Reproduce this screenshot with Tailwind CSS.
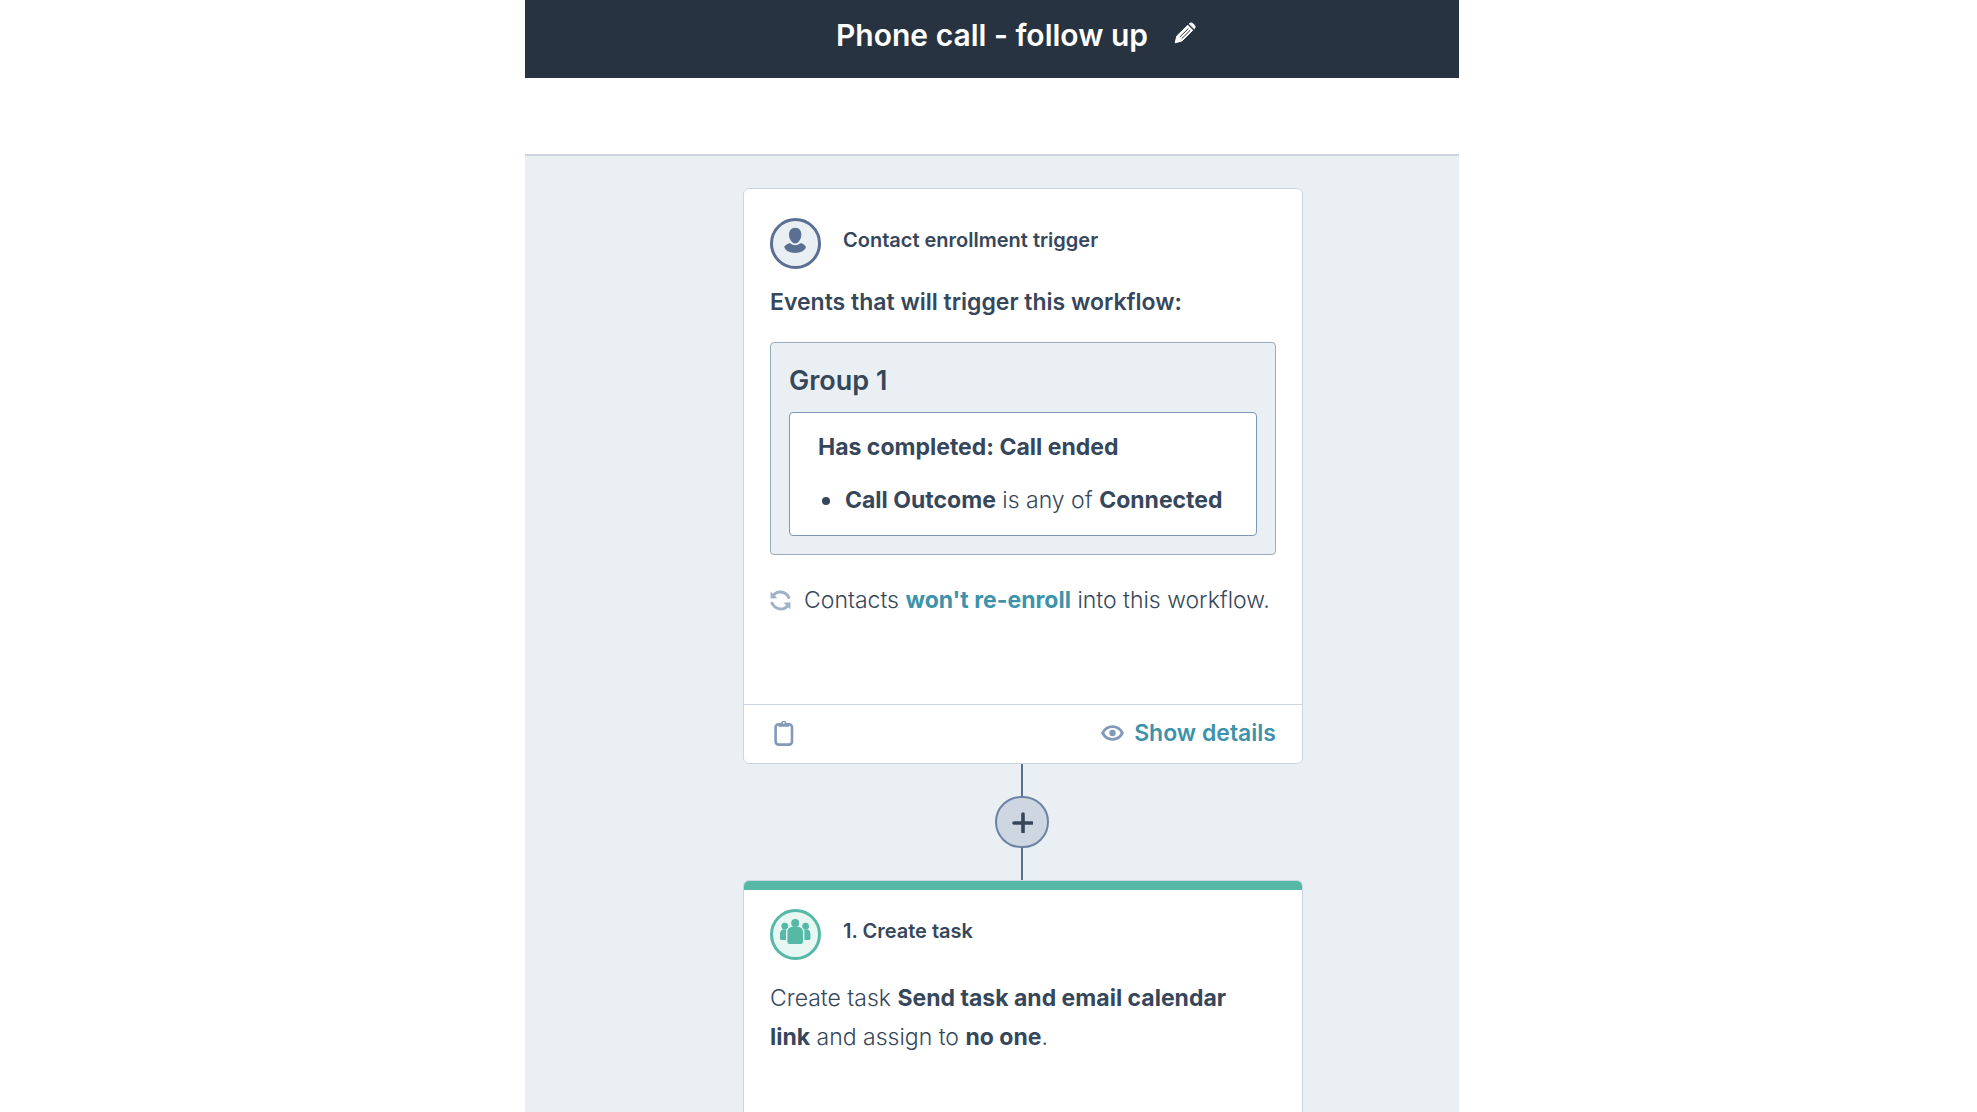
<!DOCTYPE html>
<html lang="en">
<head>
  <meta charset="UTF-8">
  <meta name="viewport" content="width=device-width, initial-scale=1.0">
  <title>Phone call - follow up</title>
  <script src="https://cdn.jsdelivr.net/npm/@tailwindcss/browser@4"></script>
</head>
<body class="bg-white h-screen overflow-hidden grid grid-cols-[525fr_934fr_518fr] font-['Inter',sans-serif] text-[#36475b]">
  <div class="col-start-2 h-screen flex flex-col">

    <!-- Top bar -->
    <header class="bg-[#283341] text-white h-[78px] shrink-0 pb-2 grid grid-cols-[1fr_auto_1fr] items-center gap-[26px]">
      <h1 class="col-start-2 text-[30px] leading-[70px] font-semibold">Phone call - follow up</h1>
      <button type="button" aria-label="Edit name" class="justify-self-start pb-1">
        <svg class="w-[22px] h-[22px]" viewBox="0 0 22 22" fill="none">
          <path d="M1.2 20.8 L2.8 14 L14 3 L19 8 L8 18.9 Z" fill="#fff" stroke="#fff" stroke-linejoin="round"/>
          <path d="M15.2 1.8 Q17 0.2 18.7 1.4 L20.6 3.4 Q21.8 5 20.3 6.8 Z" fill="#fff" stroke="#fff" stroke-linejoin="round"/>
          <path d="M5.8 15 L14.5 6.4 M7.6 16.8 L16.3 8.2 M14 2.6 L19.4 8" stroke="#283341"/>
        </svg>
      </button>
    </header>

    <!-- Workflow canvas -->
    <main class="mt-[76px] border-t-2 border-[#cbd6e2] bg-[#eaeff3] flex-1 min-h-0 pt-8 pl-[218px] flex flex-col">

      <section class="w-[560px] shrink-0 bg-white border border-[#cbd6e2] rounded-md">
        <div class="px-[26px] pt-[29px] pb-[84px]">
          <div class="flex items-start gap-[22px]">
            <svg class="w-[51px] h-[51px]" viewBox="0 0 51 51">
              <circle cx="25.5" cy="25.5" r="24" fill="#eaeff3" stroke="#5a7092" stroke-width="3"/>
              <path d="M14.2 28.6 Q17 25.6 19.8 25 Q25.2 29.6 30.8 25 Q33.8 25.8 36 28.8 Q36 31.2 32.6 33.2 Q25.2 36.8 17.6 33.2 Q14.2 31 14.2 28.6 Z" fill="#5a7092"/>
              <path d="M25.2 9.8 C29.4 9.8 31.3 12.8 31.3 16.6 C31.3 21 28.6 25.5 25.2 25.5 C21.8 25.5 19 21 19 16.6 C19 12.8 21 9.8 25.2 9.8 Z" fill="#5a7092"/>
            </svg>
            <h2 class="text-xl leading-[45px] font-semibold">Contact enrollment trigger</h2>
          </div>

          <p class="mt-[14px] text-[23px] leading-[39px] font-semibold">Events that will trigger this workflow:</p>

          <div class="mt-5 px-[18px] pt-[18px] pb-[18px] bg-[#eaeff3] border border-[#99acc2] rounded-[4px]">
            <h3 class="text-[27px] leading-[40px] font-semibold">Group 1</h3>
            <div class="mt-[11px] px-7 py-[15px] bg-white border border-[#7c98b6] rounded-[4px] text-[23px] leading-[39px]">
              <p class="font-bold">Has completed: Call ended</p>
              <ul class="mt-[14px]">
                <li class="flex items-center font-light">
                  <span class="size-2 ml-1 mr-[15px] rounded-full bg-[#36475b]"></span>
                  <span><b class="font-bold">Call Outcome</b> is any of <b class="font-bold">Connected</b></span>
                </li>
              </ul>
            </div>
          </div>

          <div class="mt-[26px] flex items-center gap-[13px]">
            <svg class="w-[21px] h-[21px] shrink-0" viewBox="0 0 21 21" fill="none">
              <path d="M3.2 5.8 C6.4 0.4 15 0.6 18.8 7.4" stroke="#a0b0c7" stroke-width="3" stroke-linecap="round"/>
              <path d="M17.8 15.2 C14.6 20.6 5.6 20.6 2 13.2" stroke="#a0b0c7" stroke-width="3" stroke-linecap="round"/>
              <path d="M0.6 1.6 L0.6 8.6 L7.4 8.2 Z M20.4 19.4 L20.4 12.2 L13.6 12.8 Z" fill="#a0b0c7"/>
            </svg>
            <p class="text-[23px] leading-[39px] font-light whitespace-nowrap">Contacts <a href="#" class="font-bold text-[#3d93ab]">won't re-enroll</a> into this workflow.</p>
          </div>
        </div>

        <div class="h-[59px] pb-[2px] px-[26px] border-t border-[#cbd6e2] flex items-center justify-between">
          <button type="button" aria-label="Copy" class="ml-1">
            <svg class="w-[20px] h-[26px]" viewBox="0 0 20 26" fill="none">
              <rect x="1.6" y="4.2" width="16.4" height="20.4" rx="3" stroke="#8299b8" stroke-width="2.6"/>
              <path d="M4.4 6.8 L4.4 4.8 Q4.6 3.4 7 3 Q7.4 0.8 9.8 0.8 Q12.2 0.8 12.6 3 Q15 3.4 15.2 4.8 L15.2 6.8 Z" fill="#8299b8"/>
              <circle cx="9.8" cy="2.9" r="0.9" fill="#fff"/>
            </svg>
          </button>
          <button type="button" class="flex items-center gap-[10px] text-[23px] leading-[39px] font-semibold text-[#3d93ab]">
            <svg class="w-[23px] h-[16px]" viewBox="0 0 23 16" fill="none">
              <path d="M1.6 8 C6 -0.4 17 -0.4 21.4 8 C17 16.4 6 16.4 1.6 8 Z" stroke="#8299b8" stroke-width="2.8" stroke-linejoin="round"/>
              <circle cx="11.5" cy="8" r="3.2" fill="#8299b8"/>
            </svg>
            Show details
          </button>
        </div>
      </section>

      <!-- Connector -->
      <div class="w-[558px] shrink-0 flex flex-col items-center">
        <div class="w-[2px] h-8 bg-[#5a7092]"></div>
        <button type="button" aria-label="Add action" class="w-[54px] h-[52px] rounded-full border-2 border-[#6b83a3] bg-[#ced6e2] flex items-center justify-center">
          <svg class="size-[22px]" viewBox="0 0 22 22" fill="none">
            <path d="M12 4 V22 M3 13 H21" stroke="#36475b" stroke-width="3.6" stroke-linecap="round" transform="translate(0 -1)"/>
          </svg>
        </button>
        <div class="w-[2px] h-8 bg-[#5a7092]"></div>
      </div>

      <section class="w-[560px] flex-1 bg-white border border-b-0 border-[#cbd6e2] rounded-t-md overflow-hidden">
        <div class="h-[9px] bg-[#55b9a6]"></div>
        <div class="px-[26px] pt-[19px]">
          <div class="flex items-start gap-[22px]">
            <svg class="w-[51px] h-[51px]" viewBox="0 0 51 51">
              <circle cx="25.5" cy="25.5" r="24" fill="#e8f6f4" stroke="#55b9a6" stroke-width="3"/>
              <g fill="#55b9a6">
                <circle cx="14.8" cy="17.2" r="3.4"/>
                <circle cx="35.6" cy="17.2" r="3.4"/>
                <path d="M12.4 20.4 H17 V31 H11.6 Q10 31 10 29.4 V24.6 Q10 21.6 12.4 20.4 Z"/>
                <path d="M38 20.4 H33.4 V31 H38.8 Q40.4 31 40.4 29.4 V24.6 Q40.4 21.6 38 20.4 Z"/>
              </g>
              <path d="M21.2 17 H29.2 Q34.4 18.6 34.4 22.4 V33 Q34.4 36 31 36 H19.4 Q16 36 16 33 V22.4 Q16 18.6 21.2 17 Z" fill="#e8f6f4"/>
              <circle cx="25.2" cy="14" r="5" fill="#e8f6f4"/>
              <circle cx="25.2" cy="14" r="4" fill="#55b9a6"/>
              <path d="M22 17.8 H28.4 Q33 18.8 33 23 V32.8 Q33 35 30.8 35 H19.6 Q17.4 35 17.4 32.8 V23 Q17.4 18.8 22 17.8 Z" fill="#55b9a6"/>
            </svg>
            <h2 class="text-xl leading-[45px] font-semibold">1. Create task</h2>
          </div>
          <p class="mt-[19px] pr-6 text-[23px] leading-[39px] font-light">Create task <b class="font-bold">Send task and email calendar link</b> and assign to <b class="font-bold">no one</b>.</p>
        </div>
      </section>
    </main>
  </div>
</body>
</html>
